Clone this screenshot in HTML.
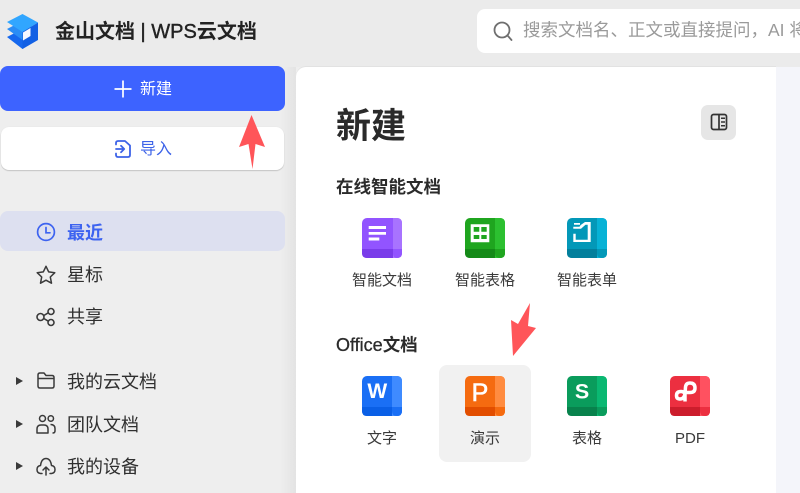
<!DOCTYPE html>
<html lang="zh">
<head>
<meta charset="utf-8">
<style>
html,body{margin:0;padding:0}
body{width:800px;height:493px;overflow:hidden;position:relative;background:#eeeeee;font-family:"Liberation Sans","Noto Sans CJK SC",sans-serif;color:#2b2b2b}
.a{position:absolute}
.t{position:absolute;white-space:nowrap;line-height:20px}
svg{position:absolute;overflow:visible}
.lbl{position:absolute;width:100px;text-align:center;font-size:15px;line-height:20px;color:#3a3a3a;white-space:nowrap}
.nav{position:absolute;left:67px;font-size:18px;line-height:24px;color:#2f2f2f;white-space:nowrap}
</style>
</head>
<body>
<div class="a" style="left:0;top:0;width:800px;height:67px;background:#ebebeb"></div>
<div class="a" style="left:776px;top:67px;width:24px;height:426px;background:#f4f5fa"></div>
<div class="a" style="left:280px;top:67px;width:16px;height:426px;background:linear-gradient(90deg,#eeeeee,#e3e3e3)"></div>
<div class="a" style="left:296px;top:67px;width:480px;height:426px;background:#fff;border-top-left-radius:10px;box-shadow:0 -1px 0 #e2e2e2"></div>

<!-- logo -->
<svg style="left:7px;top:14px" width="32" height="35" viewBox="0 0 32 35">
<path d="M0 23L15.500 15L31 24L15.500 35Z" fill="#1668ee"/>
<path d="M0 15L15.500 7L31 16L15.500 26Z" fill="#2a8df6"/>
<path d="M0 8L15.500 0L31 8.500L15.500 18Z" fill="#31a6ff"/>
<path d="M15.500 18L31 8.500V26L15.500 35Z" fill="#1260e4"/>
<path d="M16 18.500L23.500 14V22L16 26.500Z" fill="#f6f8ff"/>
</svg>
<div class="t" style="left:55px;top:21px;font-size:20px;line-height:22px;font-weight:700;color:#222">金山文档<span style="font-weight:400;-webkit-text-stroke:.4px #222"> | WPS</span>云文档</div>

<!-- search -->
<div class="a" style="left:477px;top:9px;width:340px;height:44px;background:#fff;border-radius:8px"></div>
<svg style="left:493px;top:21px" width="20" height="20" viewBox="0 0 20 20" fill="none" stroke="#6f6f6f" stroke-width="1.800"><circle cx="9" cy="9" r="7.500"/><path d="M14.500 14.500L18.500 19" stroke-linecap="round"/></svg>
<div class="t" style="left:523px;top:19px;font-size:17.500px;line-height:22px;color:#9a9a9a;width:277px;overflow:hidden">搜索文档名、正文或直接提问，AI 将为你解答</div>

<!-- buttons -->
<div class="a" style="left:0;top:66px;width:285px;height:45px;background:#3d63ff;border-radius:8px"></div>
<svg style="left:114px;top:80px" width="18" height="18" viewBox="0 0 18 18"><path d="M9 0.500V17.500M0.500 9H17.500" stroke="#fff" stroke-width="1.700"/></svg>
<div class="t" style="left:140px;top:79px;font-size:16px;color:#fff;margin-top:0.500px">新建</div>

<div class="a" style="left:1px;top:127px;width:283px;height:43px;background:#fff;border-radius:8px;box-shadow:0 1px 1px #c4c4c4,0 0 1px #ddd"></div>
<svg style="left:115px;top:140px" width="16" height="18" viewBox="0 0 16 18" fill="none" stroke="#3d63e8" stroke-width="1.800" stroke-linejoin="round" stroke-linecap="round"><path d="M1 4.500V3Q1 1 3 1H10L15 5.500V15Q15 17 13 17H3Q1 17 1 15V13.500"/><path d="M1 9H9M6 5.800L9.200 9L6 12.200"/></svg>
<div class="t" style="left:140px;top:140px;font-size:16px;color:#3d63e8">导入</div>

<!-- nav -->
<div class="a" style="left:0;top:211px;width:285px;height:40px;background:#dde0f0;border-radius:8px"></div>
<svg style="left:36px;top:222px" width="20" height="20" viewBox="0 0 20 20" fill="none" stroke="#3d63f0" stroke-width="1.700"><circle cx="10" cy="10" r="8.400"/><path d="M10 5.500V10.800H14" stroke-linecap="round"/></svg>
<div class="nav" style="top:221px;color:#3d63f0;font-weight:700">最近</div>

<svg style="left:36px;top:265px" width="20" height="20" viewBox="0 0 20 20" fill="none" stroke="#3a3a3a" stroke-width="1.500" stroke-linejoin="round"><path d="M10 1.300L12.700 6.900L18.800 7.700L14.300 12L15.500 18.200L10 15.200L4.500 18.200L5.700 12L1.200 7.700L7.300 6.900Z"/></svg>
<div class="nav" style="top:263px">星标</div>

<svg style="left:36px;top:307px" width="20" height="20" viewBox="0 0 20 20" fill="none" stroke="#3a3a3a" stroke-width="1.600"><circle cx="4.500" cy="10" r="3.500"/><circle cx="15" cy="4.500" r="3"/><circle cx="15" cy="15.500" r="3"/><path d="M7.800 8.500L12.300 5.800M7.800 11.500L12.300 14.200"/></svg>
<div class="nav" style="top:305px">共享</div>

<svg style="left:15px;top:376px" width="9" height="10" viewBox="0 0 9 10"><path d="M1 1L8 5L1 9Z" fill="#3a3a3a"/></svg>
<svg style="left:37px;top:372px" width="18" height="17" viewBox="0 0 18 17" fill="none" stroke="#3a3a3a" stroke-width="1.500" stroke-linejoin="round"><path d="M1 3Q1 1 3 1H7L9 3.500H15Q17 3.500 17 5.500V14Q17 16 15 16H3Q1 16 1 14Z"/><path d="M1 6.500H17"/></svg>
<div class="nav" style="top:370px">我的云文档</div>

<svg style="left:15px;top:419px" width="9" height="10" viewBox="0 0 9 10"><path d="M1 1L8 5L1 9Z" fill="#3a3a3a"/></svg>
<svg style="left:36px;top:414px" width="20" height="20" viewBox="0 0 20 20" fill="none" stroke="#3a3a3a" stroke-width="1.500"><circle cx="6.500" cy="4.500" r="3"/><circle cx="14.800" cy="4.500" r="2.700"/><path d="M1 19V15Q1 11 5 11H8Q12 11 12 15V19Z" stroke-linejoin="round"/><path d="M14.500 10.500Q19 10.500 19 14.500V17Q19 19 16.500 19"/></svg>
<div class="nav" style="top:413px">团队文档</div>

<svg style="left:15px;top:461px" width="9" height="10" viewBox="0 0 9 10"><path d="M1 1L8 5L1 9Z" fill="#3a3a3a"/></svg>
<svg style="left:36px;top:457px" width="20" height="19" viewBox="0 0 20 19" fill="none" stroke="#3a3a3a" stroke-width="1.500" stroke-linecap="round" stroke-linejoin="round"><path d="M6 16.500H4.500Q1 16 1 12.500Q1 9 4.500 8.500Q5.500 1.500 10 1.500Q14.500 1.500 15.500 8.500Q19 9 19 12.500Q19 16 15.500 16.500H14"/><path d="M10 18V10.500M7 13L10 10L13 13"/></svg>
<div class="nav" style="top:455px">我的设备</div>

<!-- panel content -->
<div class="t" style="left:336px;top:106px;font-size:35px;line-height:42px;font-weight:700;color:#2a2a2a">新建</div>
<div class="a" style="left:701px;top:105px;width:35px;height:35px;background:#e6e6e6;border-radius:7px"></div>
<svg style="left:710px;top:113px" width="18" height="18" viewBox="0 0 18 18" fill="none" stroke="#333" stroke-width="1.700"><rect x="1.500" y="1.500" width="15" height="15" rx="2"/><path d="M9 1.500V16.500"/><path d="M11 5.300H15M11 9H15M11 12.700H15" stroke-width="1.500"/></svg>

<div class="t" style="left:336px;top:176px;font-size:17.500px;line-height:23px;font-weight:700;color:#2b2b2b">在线智能文档</div>

<!-- row 1 -->
<svg style="left:362px;top:218px" width="40" height="40" viewBox="0 0 40 40">
<rect width="40" height="40" rx="5" fill="#9254ff"/><path d="M31 0H35Q40 0 40 5V35Q40 40 35 40H31Z" fill="#a873ff"/><path d="M0 31H31V40H5Q0 40 0 35Z" fill="#7a3cea"/><path d="M31 31H40V35Q40 40 35 40Q31 40 31 35Z" fill="#9254ff"/>
<path d="M6.700 8H24V11H6.700ZM6.700 14H24V16.800H6.700ZM6.700 19.500H17.300V22.500H6.700Z" fill="#fff"/></svg>
<svg style="left:465px;top:218px" width="40" height="40" viewBox="0 0 40 40">
<rect width="40" height="40" rx="5" fill="#1fa51f"/><path d="M30 0H35Q40 0 40 5V35Q40 40 35 40H30Z" fill="#2cc030"/><path d="M0 31H30V40H5Q0 40 0 35Z" fill="#158a18"/><path d="M30 31H40V35Q40 40 35 40Q30 40 30 35Z" fill="#1fa51f"/>
<path d="M5.700 6.300H24.300V24.300H5.700Z" fill="#fff"/><path d="M8.700 9H14.300V13.700H8.700ZM16.300 9H21.700V13.700H16.300ZM8.700 17H14.300V21H8.700ZM16.300 17H21.700V21H16.300Z" fill="#1fa51f"/></svg>
<svg style="left:567px;top:218px" width="40" height="40" viewBox="0 0 40 40">
<rect width="40" height="40" rx="5" fill="#0398b8"/><path d="M30 0H35Q40 0 40 5V35Q40 40 35 40H30Z" fill="#07b2d6"/><path d="M0 31H30V40H5Q0 40 0 35Z" fill="#037f9c"/><path d="M30 31H40V35Q40 40 35 40Q30 40 30 35Z" fill="#0398b8"/>
<path d="M13.700 7L18 4H23.700V24H6.300V15.700H8.700V21.700H20.700V6.700H18.500L14 10.700H6.300V8.700H12.500ZM7 5H13V6.800H7Z" fill="#fff"/></svg>
<div class="lbl" style="left:332px;top:271px">智能文档</div>
<div class="lbl" style="left:435px;top:271px">智能表格</div>
<div class="lbl" style="left:537px;top:271px">智能表单</div>

<div class="t" style="left:336px;top:334px;font-size:17.500px;line-height:23px;font-weight:700;color:#2b2b2b"><span style="font-weight:400;font-size:18px;-webkit-text-stroke:.3px #2b2b2b">Office</span>文档</div>

<div class="a" style="left:439px;top:365px;width:92px;height:97px;background:#f1f1f1;border-radius:8px"></div>

<!-- row 2 -->
<svg style="left:362px;top:376px" width="40" height="40" viewBox="0 0 40 40">
<rect width="40" height="40" rx="5" fill="#1a6ff5"/><path d="M30 0H35Q40 0 40 5V35Q40 40 35 40H30Z" fill="#3f8bff"/><path d="M0 31H30V40H5Q0 40 0 35Z" fill="#0a5fe6"/><path d="M30 31H40V35Q40 40 35 40Q30 40 30 35Z" fill="#1a6ff5"/>
<text x="15.300" y="22" text-anchor="middle" font-family="Liberation Sans" font-weight="700" font-size="21" fill="#fff">W</text></svg>
<svg style="left:465px;top:376px" width="40" height="40" viewBox="0 0 40 40">
<rect width="40" height="40" rx="5" fill="#f56b10"/><path d="M30 0H35Q40 0 40 5V35Q40 40 35 40H30Z" fill="#ff8c40"/><path d="M0 31H30V40H5Q0 40 0 35Z" fill="#e24e00"/><path d="M30 31H40V35Q40 40 35 40Q30 40 30 35Z" fill="#f56b10"/>
<text x="15" y="25" text-anchor="middle" font-family="Liberation Sans" font-size="25" fill="#fff" stroke="#fff" stroke-width=".6">P</text></svg>
<svg style="left:567px;top:376px" width="40" height="40" viewBox="0 0 40 40">
<rect width="40" height="40" rx="5" fill="#0a9c5c"/><path d="M30 0H35Q40 0 40 5V35Q40 40 35 40H30Z" fill="#0ab872"/><path d="M0 31H30V40H5Q0 40 0 35Z" fill="#08824c"/><path d="M30 31H40V35Q40 40 35 40Q30 40 30 35Z" fill="#0a9c5c"/>
<text x="15" y="22.700" text-anchor="middle" font-family="Liberation Sans" font-weight="700" font-size="21.500" fill="#fff">S</text></svg>
<svg style="left:670px;top:376px" width="40" height="40" viewBox="0 0 40 40">
<rect width="40" height="40" rx="5" fill="#ec2f40"/><path d="M30 0H35Q40 0 40 5V35Q40 40 35 40H30Z" fill="#ff5160"/><path d="M0 31H30V40H5Q0 40 0 35Z" fill="#cc1d2c"/><path d="M30 31H40V35Q40 40 35 40Q30 40 30 35Z" fill="#ec2f40"/>
<path d="M15 25.500V19Q15 15.500 11 15.500Q6.500 15.500 6.500 19.500Q6.500 23 10 23Q14 23 15 18L15.500 11Q16 7 20 7Q25 7 25 12Q25 16.500 20 16.500H15" fill="none" stroke="#fff" stroke-width="3.500"/></svg>
<div class="lbl" style="left:332px;top:429px">文字</div>
<div class="lbl" style="left:435px;top:429px">演示</div>
<div class="lbl" style="left:537px;top:429px">表格</div>
<div class="lbl" style="left:640px;top:429px">PDF</div>

<!-- arrows -->
<svg style="left:0;top:0" width="800" height="493" viewBox="0 0 800 493">
<path d="M251.500 115L265 147L255.500 144L252.500 169L248.500 144L239 147Z" fill="#ff5559"/>
<path d="M530 303L528 326L536 328L513 356L511 320L518 324Z" fill="#ff5559"/>
</svg>
</body>
</html>
